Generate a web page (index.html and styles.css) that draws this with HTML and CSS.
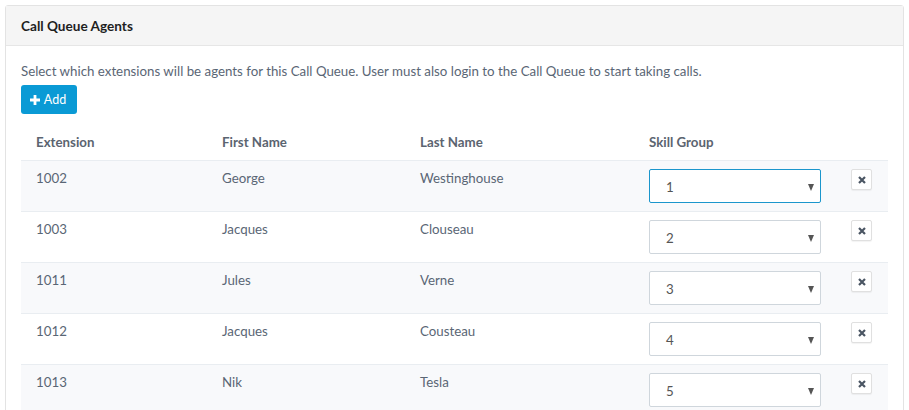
FILE: index.html
```html
<!DOCTYPE html>
<html>
<head>
    <title>Call Queue Agents</title>
    <meta charset="UTF-8">
    <link rel="stylesheet" href="styles.css">
</head>
<body>
    <div class="panel">
        <div class="panel-heading">Call Queue Agents</div>
        <div class="panel-body">
            <p class="help">Select which extensions will be agents for this Call Queue. User must also login to the Call Queue to start taking calls.</p>
            <button class="btn-add">
                <svg class="plus" viewBox="0 0 10 10" width="10" height="10"><path d="M3.6 0h2.8v3.6H10v2.8H6.4V10H3.6V6.4H0V3.6h3.6z" fill="white"/></svg>
                Add
            </button>

            <table class="agents">
                <thead>
                    <tr>
                        <th class="c-ext">Extension</th>
                        <th class="c-first">First Name</th>
                        <th class="c-last">Last Name</th>
                        <th class="c-skill">Skill Group</th>
                        <th class="c-del"></th>
                    </tr>
                </thead>
                <tbody>
                    <tr>
                        <td>1002</td><td>George</td><td>Westinghouse</td>
                        <td><div class="select focused"><span>1</span><i class="caret"></i></div></td>
                        <td><button class="btn-del"><svg viewBox="0 0 8 8" width="8" height="8"><path d="M1 1L7 7M7 1L1 7" stroke="#4a5563" stroke-width="2.2"/></svg></button></td>
                    </tr>
                    <tr>
                        <td>1003</td><td>Jacques</td><td>Clouseau</td>
                        <td><div class="select"><span>2</span><i class="caret"></i></div></td>
                        <td><button class="btn-del"><svg viewBox="0 0 8 8" width="8" height="8"><path d="M1 1L7 7M7 1L1 7" stroke="#4a5563" stroke-width="2.2"/></svg></button></td>
                    </tr>
                    <tr>
                        <td>1011</td><td>Jules</td><td>Verne</td>
                        <td><div class="select"><span>3</span><i class="caret"></i></div></td>
                        <td><button class="btn-del"><svg viewBox="0 0 8 8" width="8" height="8"><path d="M1 1L7 7M7 1L1 7" stroke="#4a5563" stroke-width="2.2"/></svg></button></td>
                    </tr>
                    <tr>
                        <td>1012</td><td>Jacques</td><td>Cousteau</td>
                        <td><div class="select"><span>4</span><i class="caret"></i></div></td>
                        <td><button class="btn-del"><svg viewBox="0 0 8 8" width="8" height="8"><path d="M1 1L7 7M7 1L1 7" stroke="#4a5563" stroke-width="2.2"/></svg></button></td>
                    </tr>
                    <tr>
                        <td>1013</td><td>Nik</td><td>Tesla</td>
                        <td><div class="select"><span>5</span><i class="caret"></i></div></td>
                        <td><button class="btn-del"><svg viewBox="0 0 8 8" width="8" height="8"><path d="M1 1L7 7M7 1L1 7" stroke="#4a5563" stroke-width="2.2"/></svg></button></td>
                    </tr>
                </tbody>
            </table>
        </div>
    </div>
</body>
</html>
```

FILE: styles.css
```css
* {
    margin: 0;
    padding: 0;
    box-sizing: border-box;
}

body {
    font-family: Lato, 'Noto Sans', sans-serif;
    font-size: 13.3px;
    color: #5a6675;
    background: white;
    padding: 5px 5px 0 5px;
}

.panel {
    border: 1px solid #e3e3e3;
    border-radius: 3px;
    background: white;
}

.panel-heading {
    background: #f5f5f5;
    border-bottom: 1px solid #e6e6e6;
    height: 40px;
    padding: 0 15px;
    display: flex;
    align-items: center;
    font-weight: bold;
    font-size: 13.6px;
    color: #1f1f1f;
}

.panel-body {
    padding: 16px 15px 0 15px;
}

.help {
    line-height: 18px;
    margin-bottom: 5px;
}

.btn-add {
    background: #0a9ad5;
    color: white;
    border: none;
    border-radius: 3px;
    height: 29px;
    width: 56px;
    font-family: inherit;
    font-size: 12.5px;
    display: flex;
    align-items: center;
    justify-content: center;
    gap: 4px;
    padding-right: 2px;
}

.agents {
    margin-top: 10px;
    width: 867px;
    border-collapse: collapse;
}

.agents th,
.agents td {
    text-align: left;
    vertical-align: top;
    padding: 8px 15px;
    line-height: 18px;
}

.agents th {
    font-weight: bold;
    color: #5b6470;
    padding: 9px 15px;
}

.agents td {
    border-top: 1px solid #e9edf1;
}

.agents tbody tr:nth-child(odd) {
    background: #f8f9fb;
}

.c-ext { width: 186px; }
.c-first { width: 198px; }
.c-last { width: 229px; }
.c-skill { width: 202px; }
.c-del { width: 52px; }

.select {
    width: 172px;
    height: 34px;
    border: 1px solid #cfd6dc;
    border-radius: 2px;
    background: white;
    display: flex;
    align-items: center;
    justify-content: space-between;
    padding: 2px 6px 0 16px;
    color: #555;
}

.select.focused {
    border-color: #1b96cc;
}

.caret {
    width: 0;
    height: 0;
    border-left: 3.5px solid transparent;
    border-right: 3.5px solid transparent;
    border-top: 7px solid #555;
}

.btn-del {
    width: 21px;
    height: 21px;
    background: white;
    border: 1px solid #e0e0e0;
    border-radius: 2px;
    box-shadow: 0 1px 1px rgba(0,0,0,0.05);
    display: flex;
    align-items: center;
    justify-content: center;
}
```
